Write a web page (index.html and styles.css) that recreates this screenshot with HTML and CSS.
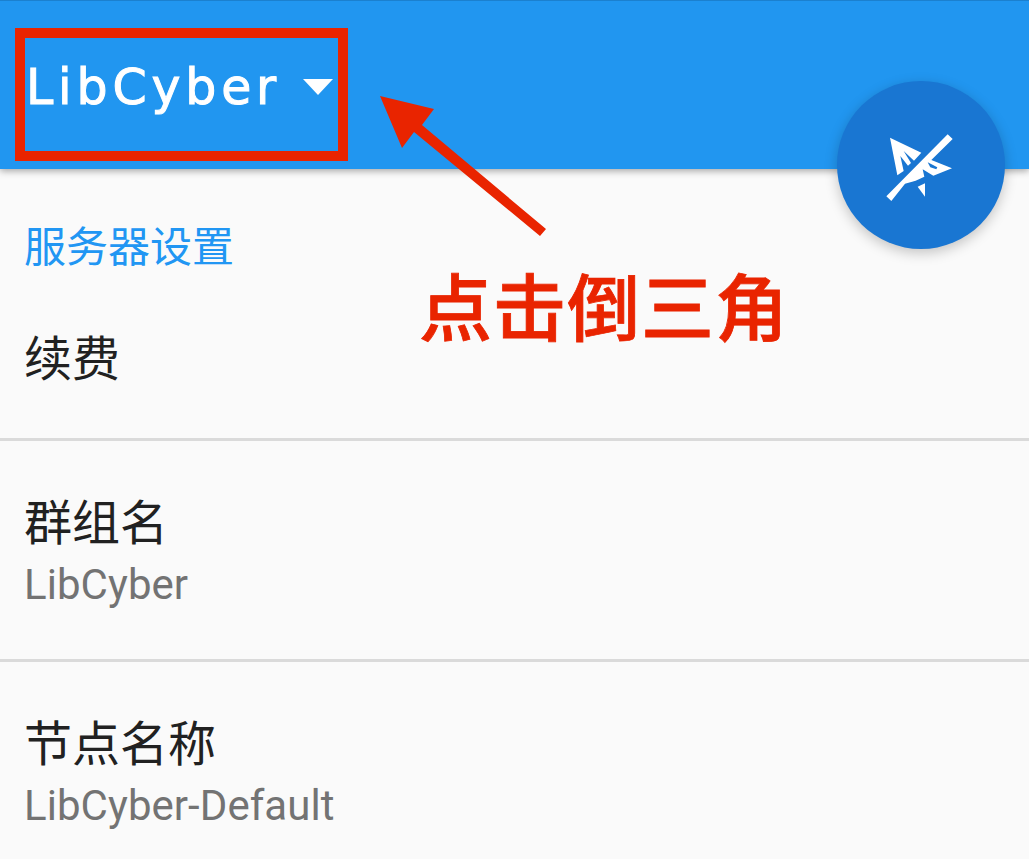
FILE: index.html
```html
<!DOCTYPE html>
<html lang="zh-CN">
<head>
<meta charset="utf-8">
<title>LibCyber</title>
<link rel="stylesheet" href="styles.css">
</head>
<body>
<div class="screen">
  <header class="toolbar">
    <h1 class="brand">LibCyber</h1>
    <svg class="caret" width="30" height="16" viewBox="0 0 30 16"><path d="M0 0H30L15 16Z" fill="#fff"/></svg>
  </header>
  <main class="settings">
    <h2 class="section-title">服务器设置</h2>
    <section class="row row-first"><div class="row-title">续费</div></section>
    <section class="row"><div class="row-title">群组名</div><div class="row-value">LibCyber</div></section>
    <section class="row"><div class="row-title">节点名称</div><div class="row-value">LibCyber-Default</div></section>
  </main>
  <button class="fab" aria-label="connect">
    <svg width="100" height="90" viewBox="0 0 300 270">
      <path fill="#fff" d="M60 53L154 98L132 122L101 93L123 129L114 137L91 108L101 153L82 166Z"/>
      <path fill="#fff" d="M233 43L248 57L184 120L246 145L190 167L158 148L163 170L137 182L105 191L64 243L49 229L92 185Z"/>
      <path fill="#1976d2" d="M173 127L202 142L199 148L181 142Z"/>
      <path fill="#fff" d="M143 200L165 190L165 230Z"/>
    </svg>
  </button>
  <div class="highlight"></div>
  <svg class="arrow" width="200" height="170" viewBox="0 0 200 170"><path fill="#e92400" d="M20 16L74 29L62 45L186 149L180 156L54 52L42 68Z"/></svg>
  <div class="note">点击倒三角</div>
</div>
</body>
</html>
```
FILE: styles.css
```css
* { box-sizing: border-box; }
body { margin: 0; background: #fafafa; font-family: Roboto, "Noto Sans CJK SC", sans-serif; }
.screen { position: relative; width: 1029px; height: 859px; overflow: hidden; background: #fafafa; }
.toolbar {
  display: flex; align-items: flex-start; height: 169px; padding: 58px 0 0 26px;
  background: #2196f0; border-top: 1px solid #1b80cf;
  box-shadow: 0 2px 7px rgba(0, 0, 0, .35);
}
.brand {
  width: 277px; margin: 0; color: #fff; white-space: nowrap;
  font: 400 49px/58px "DejaVu Sans", sans-serif; letter-spacing: 4.8px;
  -webkit-text-stroke: 1px #fff;
}
.caret { margin-top: 20px; }
.settings { display: flex; flex-direction: column; }
.section-title { margin: 0; padding: 49px 24px 0; color: #2196f3; font-weight: 400; font-size: 42px; line-height: 60px; }
.row { height: 221px; padding: 51px 24px 0; border-bottom: 3px solid #dadada; }
.row-first { height: 163px; padding-top: 50px; }
.row:last-child { border-bottom: 0; }
.row-title { color: #212121; font-size: 48px; line-height: 64px; }
.row-value { color: #737373; font-size: 42px; line-height: 58px; letter-spacing: .05px; }
.fab {
  position: absolute; left: 837px; top: 81px; width: 168px; height: 168px; padding: 0;
  display: flex; border: 0; border-radius: 50%; background: #1976d2;
  box-shadow: 0 4px 13px rgba(0, 0, 0, .22);
}
.fab svg { margin: 39px 0 0 33px; }
.highlight { position: absolute; left: 15px; top: 28px; width: 333px; height: 133px; border: 10px solid #e92400; }
.arrow { position: absolute; left: 360px; top: 80px; }
.note {
  position: absolute; left: 419px; top: 260px; color: #e92400; white-space: nowrap;
  font-size: 73px; line-height: 100px; font-weight: 500; letter-spacing: 1px;
  -webkit-text-stroke: .8px #e92400;
}
```
